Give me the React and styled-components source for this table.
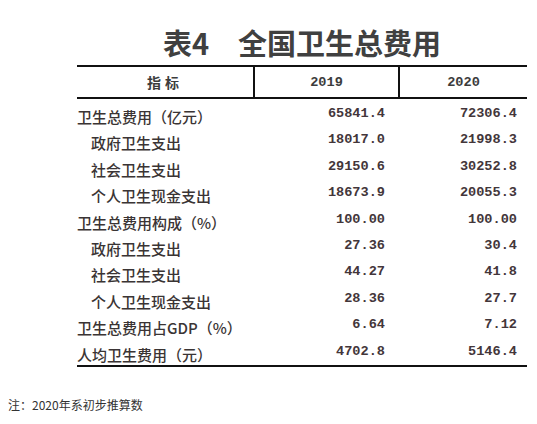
import styled, { createGlobalStyle } from "styled-components";

const GlobalStyle = createGlobalStyle`
  body {
    margin: 0;
    background: #ffffff;
  }
`;

const rows = [
  { label: "卫生总费用（亿元）", a: "65841.4", b: "72306.4" },
  { label: "政府卫生支出", a: "18017.0", b: "21998.3", sub: true },
  { label: "社会卫生支出", a: "29150.6", b: "30252.8", sub: true },
  { label: "个人卫生现金支出", a: "18673.9", b: "20055.3", sub: true },
  { label: "卫生总费用构成（%）", a: "100.00", b: "100.00" },
  { label: "政府卫生支出", a: "27.36", b: "30.4", sub: true },
  { label: "社会卫生支出", a: "44.27", b: "41.8", sub: true },
  { label: "个人卫生现金支出", a: "28.36", b: "27.7", sub: true },
  { label: "卫生总费用占GDP（%）", a: "6.64", b: "7.12" },
  { label: "人均卫生费用（元）", a: "4702.8", b: "5146.4" },
];

const Page = styled.div`
  width: 537px;
  height: 424px;
  padding-top: 24px;
  box-sizing: border-box;
  display: flex;
  flex-direction: column;
`;

const Title = styled.h1`
  margin: 0 0 5px 77px;
  width: 450px;
  height: 36px;
  line-height: 36px;
  text-align: center;
  font-family: "Noto Sans CJK SC", sans-serif;
  font-size: 29px;
  font-weight: 700;
  color: #404040;
`;

const Table = styled.div`
  margin-left: 77px;
  width: 450px;
  border-top: 2px solid #111;
  border-bottom: 2px solid #111;
`;

const Row = styled.div`
  display: grid;
  grid-template-columns: 176px 145px 129px;
  height: ${(p) => (p.$head ? "30px" : "26.4px")};
`;

const HeadRow = styled(Row)`
  border-bottom: 2px solid #111;
  margin-bottom: 2px;
`;

const HeadCell = styled.div`
  display: flex;
  align-items: center;
  justify-content: center;
  border-left: ${(p) => (p.$first ? "none" : "2px solid #111")};
  font-family: ${(p) =>
    p.$num ? '"Liberation Mono", monospace' : '"Noto Sans CJK SC", sans-serif'};
  font-size: ${(p) => (p.$num ? "13.6px" : "14px")};
  font-weight: 700;
  color: #3c3c3c;
  letter-spacing: ${(p) => (p.$num ? "0" : "4px")};
`;

const Label = styled.div`
  padding: 6px 0 0 ${(p) => (p.$sub ? "14px" : "0")};
  line-height: 20px;
  font-family: "Noto Sans CJK SC", sans-serif;
  font-size: 15px;
  font-weight: 500;
  color: #3a3434;
  white-space: nowrap;
`;

const Num = styled.div`
  padding: 3px ${(p) => (p.$last ? "10px" : "13px")} 0 0;
  line-height: 20px;
  text-align: right;
  font-family: "Liberation Mono", monospace;
  font-size: 13.6px;
  font-weight: 700;
  color: #43363a;
`;

const Note = styled.div`
  margin: 30px 0 0 8px;
  line-height: 16px;
  font-family: "Noto Sans CJK SC", sans-serif;
  font-size: 12px;
  color: #333;
`;

export default function App() {
  return (
    <>
      <GlobalStyle />
      <Page>
        <Title>表4　全国卫生总费用</Title>
        <Table>
          <HeadRow $head>
            <HeadCell $first>指标</HeadCell>
            <HeadCell $num>2019</HeadCell>
            <HeadCell $num>2020</HeadCell>
          </HeadRow>
          {rows.map((r, i) => (
            <Row key={i}>
              <Label $sub={r.sub}>{r.label}</Label>
              <Num>{r.a}</Num>
              <Num $last>{r.b}</Num>
            </Row>
          ))}
        </Table>
        <Note>注：2020年系初步推算数</Note>
      </Page>
    </>
  );
}
